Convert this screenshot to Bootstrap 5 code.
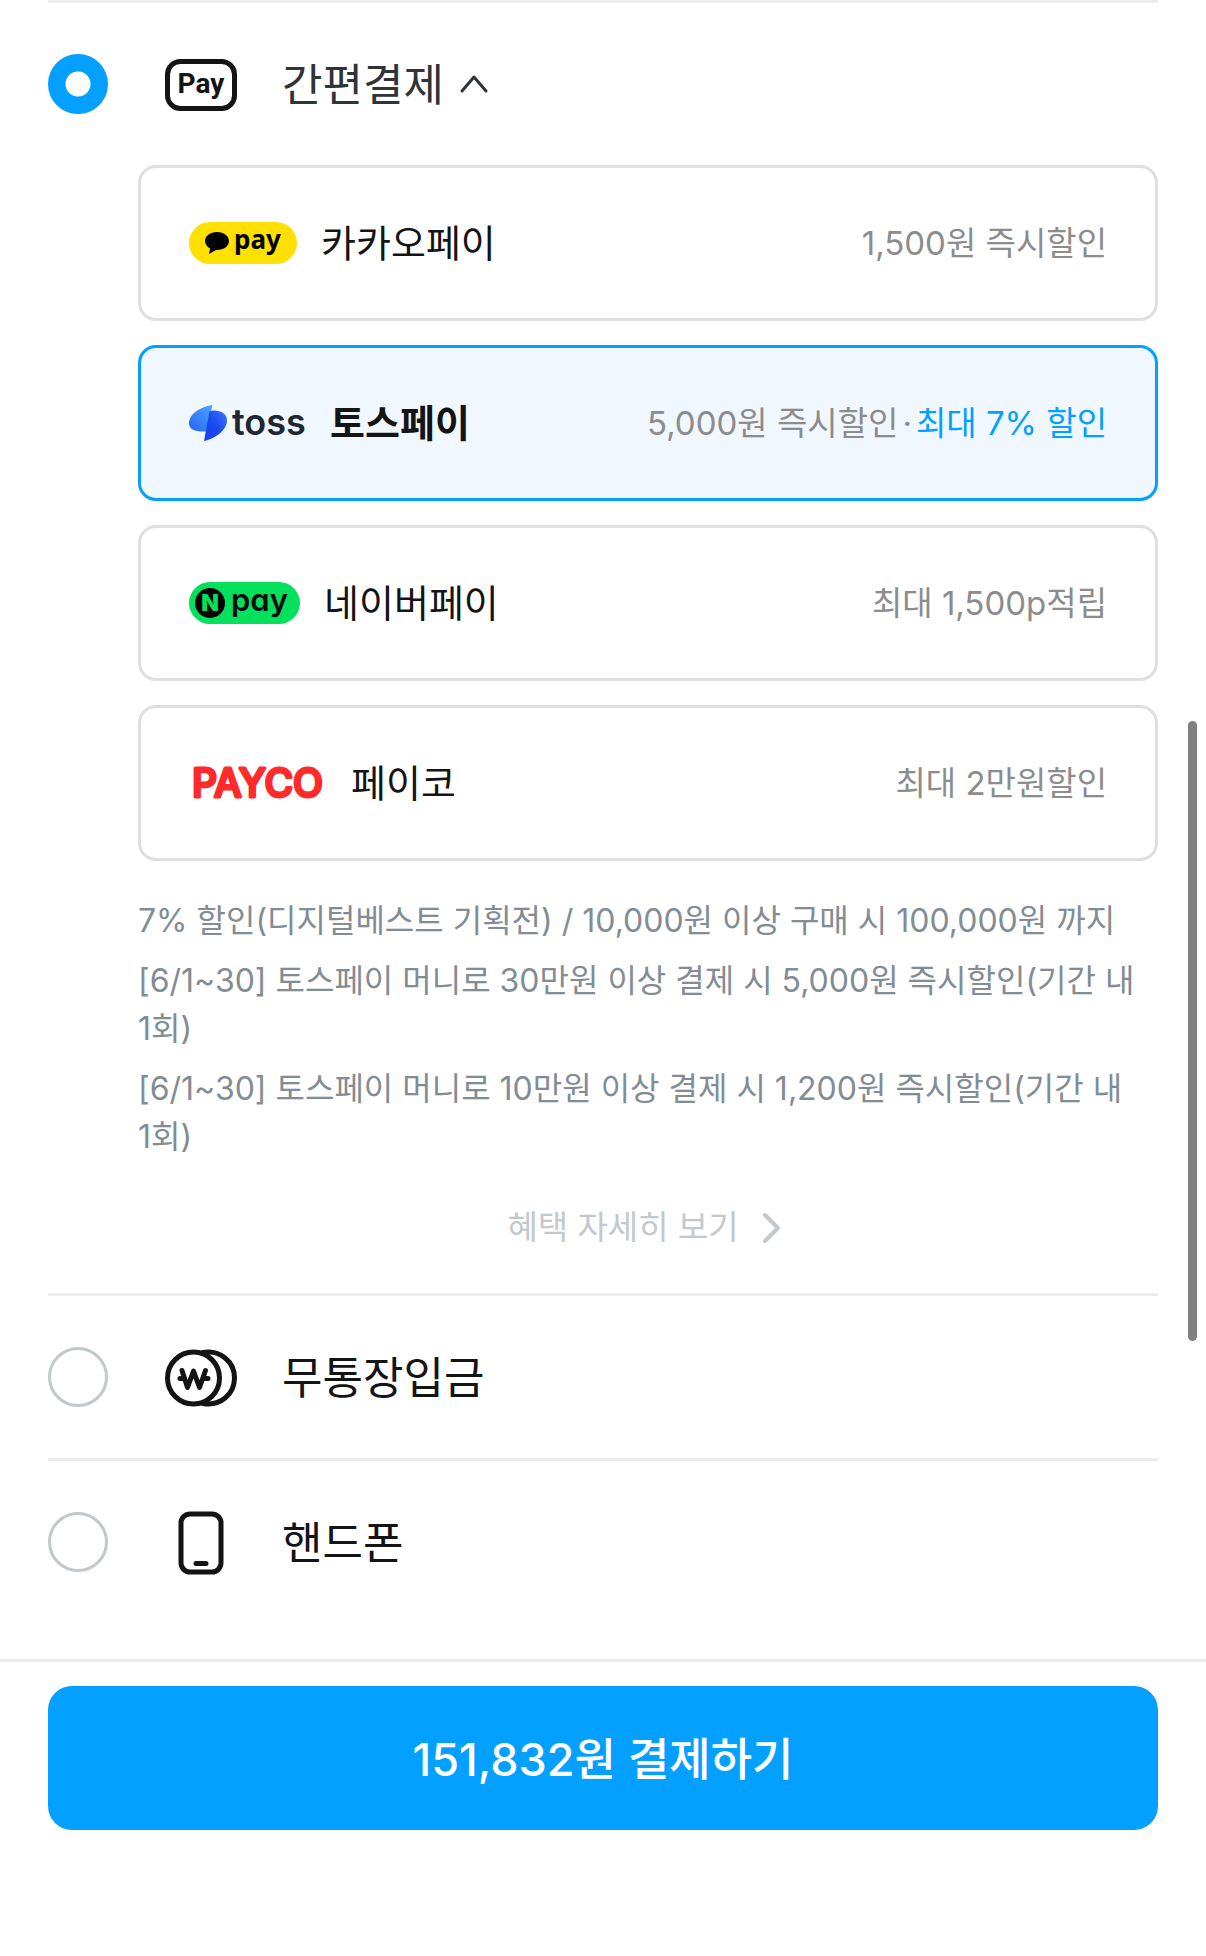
<!DOCTYPE html>
<html lang="ko">
<head>
<meta charset="utf-8">
<meta name="viewport" content="width=device-width, initial-scale=1">
<title>결제 수단</title>
<link href="https://cdn.jsdelivr.net/npm/bootstrap@5.3.0/dist/css/bootstrap.min.css" rel="stylesheet">
<style>
body{font-family:Inter,"Noto Sans CJK KR",sans-serif;color:#141414;background:#fff;font-size:33px;line-height:48px}
svg{overflow:visible}
.pay-wrap{padding:0 48px}
.method{border-top:3px solid #ebecee}
.method-row{min-height:162px}
.method-row .form-check-input{width:60px;height:60px;border:3px solid #c3c8cc;box-shadow:none}
.method-row .form-check-input:checked{background-color:#03a0ff;border-color:#03a0ff;background-image:radial-gradient(circle,#fff 12px,transparent 13px)}
.method-icon{width:72px;margin-left:57px;margin-right:45px}
.method-name{font-size:44px;line-height:60px;padding-top:2px}
.open-name{color:#2f3438}
.method-body{padding-left:90px}
.pay-option{min-height:156px;padding:0 48px;border:3px solid #dfdfdf;border-radius:18px;cursor:pointer}
.btn-check:checked + .pay-option{border-color:#03a0ff;background:#f0f7fe}
.btn-check:checked + .pay-option .option-name{font-weight:600}
.option-name{font-size:38px}
.benefit{color:#8c8c8c}
.benefit-max{color:#03a0ff}
.notes{margin-top:36px;color:#828c94;font-size:32px;word-break:keep-all}
.more-link{min-height:132px;color:#c2c8cc;text-decoration:none}
.last-method{margin-bottom:36px}
.pay-footer{border-top:3px solid #ededed;padding:24px 48px 126px}
.pay-submit{min-height:144px;padding:4px 0 0;border-radius:24px;background:#03a0ff;color:#fff;font-size:45px;font-weight:500}
.pay-submit:hover{background:#0090e8;color:#fff}
.naver-word{font-feature-settings:"cv11"}
.scroll-thumb{position:fixed;right:9px;top:721px;width:9px;height:620px;border-radius:5px;background:#808080}
</style>
<script src="https://cdn.jsdelivr.net/npm/bootstrap@5.3.0/dist/js/bootstrap.bundle.min.js"></script>
</head>
<body>
<form>
<main class="pay-wrap">
  <section class="method">
    <div class="method-row d-flex align-items-center">
      <input class="form-check-input m-0 flex-shrink-0" type="radio" name="method" id="m-easy" checked>
      <label class="d-flex align-items-center" for="m-easy">
        <svg class="method-icon" height="72" viewBox="0 0 72 72" aria-hidden="true">
          <rect x="2.500" y="13.500" width="67" height="47" rx="13" fill="none" stroke="#141414" stroke-width="5"/>
          <text x="36" y="45" text-anchor="middle" font-family="Roboto" font-weight="700" font-size="28" fill="#141414">Pay</text>
        </svg>
        <span class="method-name open-name">간편결제</span>
      </label>
      <button class="btn border-0 p-0 ms-3 d-flex" type="button" data-bs-toggle="collapse" data-bs-target="#easy-body" aria-label="접기">
        <svg width="30" height="24" viewBox="0 0 30 24" fill="none" stroke="#2f3438" stroke-width="3" stroke-linecap="round" stroke-linejoin="round"><path d="M2 19 14 5l12 14"/></svg>
      </button>
    </div>
    <div class="method-body collapse show" id="easy-body">
      <div class="d-flex flex-column gap-4">
        <div>
          <input class="btn-check" type="radio" name="easy" id="kakao">
          <label class="pay-option d-flex align-items-center justify-content-between" for="kakao">
            <span class="d-flex align-items-center gap-4">
              <svg width="108" height="42" viewBox="0 0 108 42" aria-hidden="true">
                <rect width="108" height="42" rx="21" fill="#ffe000"/>
                <path d="M28 10c-7 0-12 4-12 9 0 3 2 6 5 7.500L20 32l7-4h1c7 0 12-4 12-9s-5-9-12-9z" fill="#000"/>
                <text x="45" y="27" font-family="Noto Sans" font-weight="700" font-size="26" fill="#000">pay</text>
              </svg>
              <span class="option-name">카카오페이</span>
            </span>
            <span class="benefit">1,500원 즉시할인</span>
          </label>
        </div>
        <div>
          <input class="btn-check" type="radio" name="easy" id="toss" checked>
          <label class="pay-option d-flex align-items-center justify-content-between" for="toss">
            <span class="d-flex align-items-center gap-4">
              <svg width="117" height="42" viewBox="0 0 117 42" aria-hidden="true">
                <defs>
                  <linearGradient id="tl" x1="1" y1="0" x2="0" y2="1"><stop stop-color="#4ea6ff"/><stop offset="1" stop-color="#2563f5"/></linearGradient>
                  <linearGradient id="tr" x1="1" y1="0" x2="0" y2="1"><stop stop-color="#3c78fa"/><stop offset=".5" stop-color="#1c49ee"/><stop offset="1" stop-color="#1740ec"/></linearGradient>
                </defs>
                <path d="M23.500 3C10 5 0 13 0 21 0 28 7 30 17 29.500z" fill="url(#tl)"/>
                <path d="M20.500 9C30 7 38 11 38 18.500c0 9-11 18-23 20.500z" fill="url(#tr)"/>
                <text x="43" y="33" font-family="Inter" font-weight="600" font-size="36" fill="#202632">toss</text>
              </svg>
              <span class="option-name">토스페이</span>
            </span>
            <span class="benefit d-flex"><span>5,000원 즉시할인</span><span class="mx-1">·</span><span class="benefit-max">최대 7% 할인</span></span>
          </label>
        </div>
        <div>
          <input class="btn-check" type="radio" name="easy" id="naver">
          <label class="pay-option d-flex align-items-center justify-content-between" for="naver">
            <span class="d-flex align-items-center gap-4">
              <svg width="111" height="42" viewBox="0 0 111 42" aria-hidden="true">
                <rect width="111" height="42" rx="21" fill="#03e05b"/>
                <circle cx="21" cy="21" r="15" fill="#000"/>
                <text x="21" y="29" text-anchor="middle" font-family="Inter" font-weight="900" font-size="23" fill="#03e05b">N</text>
                <text class="naver-word" x="42" y="29" font-family="Inter" font-weight="600" font-size="31" fill="#0b0b0b">pay</text>
              </svg>
              <span class="option-name">네이버페이</span>
            </span>
            <span class="benefit">최대 1,500p적립</span>
          </label>
        </div>
        <div>
          <input class="btn-check" type="radio" name="easy" id="payco">
          <label class="pay-option d-flex align-items-center justify-content-between" for="payco">
            <span class="d-flex align-items-center gap-4">
              <svg width="138" height="42" viewBox="0 0 138 42" aria-hidden="true">
                <text x="3" y="35" font-family="Inter" font-weight="500" font-size="39" fill="#ff2a2a" stroke="#ff2a2a" stroke-width="3" stroke-linejoin="round">PAYCO</text>
              </svg>
              <span class="option-name">페이코</span>
            </span>
            <span class="benefit">최대 2만원할인</span>
          </label>
        </div>
      </div>
      <ul class="notes list-unstyled mb-0 d-flex flex-column">
        <li>7% 할인(디지털베스트 기획전) / 10,000원 이상 구매 시 100,000원 까지</li>
        <li class="mt-2 pt-1">[6/1~30] 토스페이 머니로 30만원 이상 결제 시 5,000원 즉시할인(기간 내 1회)</li>
        <li class="mt-2 pt-1">[6/1~30] 토스페이 머니로 10만원 이상 결제 시 1,200원 즉시할인(기간 내 1회)</li>
      </ul>
      <a class="more-link d-flex align-items-center justify-content-center gap-4 pe-2" href="#">혜택 자세히 보기
        <svg width="18" height="30" viewBox="0 0 18 30" fill="none" stroke="#c2c8cc" stroke-width="4" stroke-linecap="round" stroke-linejoin="round" aria-hidden="true"><path d="m2 3 13 13L2 29"/></svg>
      </a>
    </div>
  </section>
  <section class="method">
    <div class="method-row d-flex align-items-center">
      <input class="form-check-input m-0 flex-shrink-0" type="radio" name="method" id="m-bank">
      <label class="d-flex align-items-center" for="m-bank">
        <svg class="method-icon" height="72" viewBox="0 0 72 72" fill="none" stroke="#141414" stroke-width="5" stroke-linecap="round" stroke-linejoin="round" aria-hidden="true">
          <circle cx="28.500" cy="37" r="26"/>
          <path d="M38 11.500c17-3 31.500 9 31.500 25.500S55 65.500 38 62.500"/>
          <path d="m17 29.500 5.500 17L28.500 30l6 16.500L40.500 29.500M15 37.500h4M39 37.500h4"/>
        </svg>
        <span class="method-name">무통장입금</span>
      </label>
    </div>
  </section>
  <section class="method last-method">
    <div class="method-row d-flex align-items-center">
      <input class="form-check-input m-0 flex-shrink-0" type="radio" name="method" id="m-phone">
      <label class="d-flex align-items-center" for="m-phone">
        <svg class="method-icon" height="72" viewBox="0 0 72 72" fill="none" stroke="#141414" stroke-width="5" stroke-linecap="round" aria-hidden="true">
          <rect x="16" y="8" width="40" height="58" rx="9"/>
          <path d="M31 57.500h10"/>
        </svg>
        <span class="method-name">핸드폰</span>
      </label>
    </div>
  </section>
</main>
<footer class="pay-footer">
  <button class="pay-submit btn border-0 w-100" type="submit">151,832원 결제하기</button>
</footer>
</form>
<div class="scroll-thumb" aria-hidden="true"></div>
</body>
</html>
